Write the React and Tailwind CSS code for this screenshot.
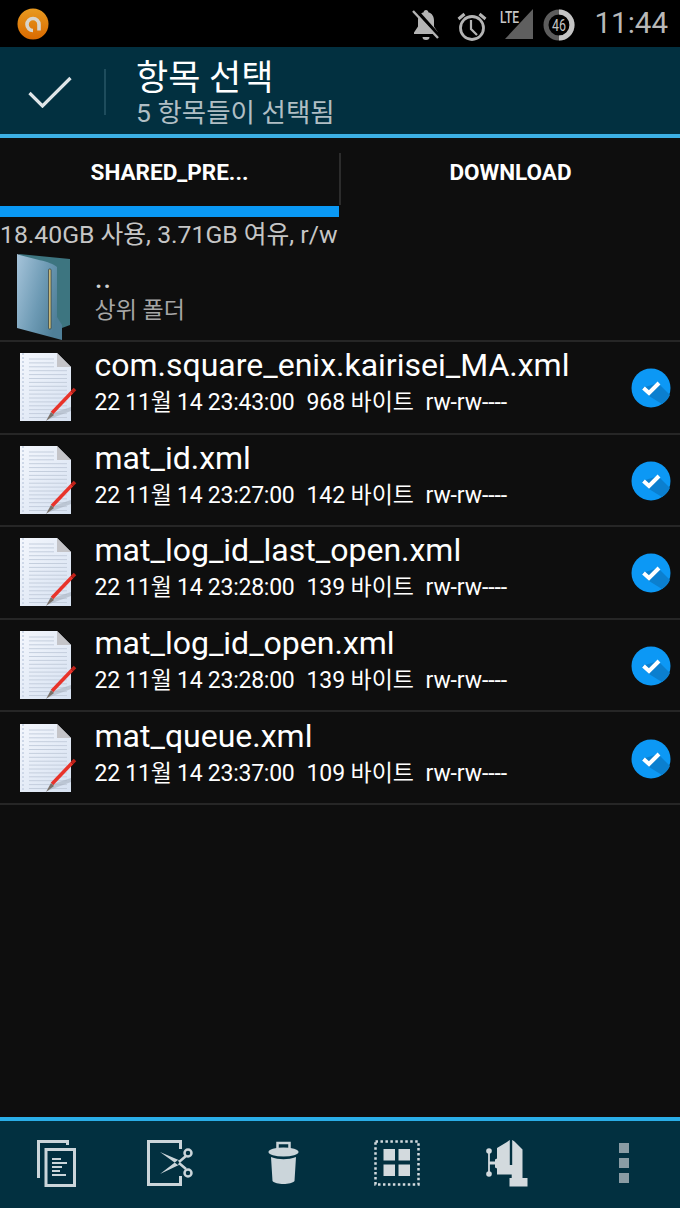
const kr = 'font-["Roboto","Noto_Sans_CJK_KR",sans-serif]';

const files = [
  { name: 'com.square_enix.kairisei_MA.xml', date: '22 11월 14 23:43:00', size: '968 바이트' },
  { name: 'mat_id.xml', date: '22 11월 14 23:27:00', size: '142 바이트' },
  { name: 'mat_log_id_last_open.xml', date: '22 11월 14 23:28:00', size: '139 바이트' },
  { name: 'mat_log_id_open.xml', date: '22 11월 14 23:28:00', size: '139 바이트' },
  { name: 'mat_queue.xml', date: '22 11월 14 23:37:00', size: '109 바이트' },
];

function AppLogo() {
  return (
    <svg width="34" height="34" viewBox="0 0 34 34">
      <defs>
        <linearGradient id="lg" x1="0" y1="0" x2="0" y2="1">
          <stop offset="0" stopColor="#e89a20" />
          <stop offset="1" stopColor="#d96a00" />
        </linearGradient>
      </defs>
      <circle cx="17" cy="17" r="15.5" fill="url(#lg)" />
      <path d="M23 23.500V17.500a6 6 0 1 0-6 6" fill="none" stroke="#d8d4cc" strokeWidth="3.600" />
    </svg>
  );
}

function StatusIcons() {
  return (
    <div className="flex items-center h-full">
      <svg width="30" height="32" viewBox="0 0 30 32" className="mt-0.5">
        <path d="M15 1c1.500 0 2.300 1 2.300 2.200 4 1.200 5.700 4.400 5.700 8.300v6l4 6v1.500H3V23.500l4-6v-6c0-3.900 1.700-7.100 5.700-8.300C12.700 2 13.500 1 15 1z" fill="#b4b4b4" />
        <path d="M11.500 28h7a3.500 3 0 0 1-7 0z" fill="#b4b4b4" />
        <path d="M4 0l26 29" stroke="#000" strokeWidth="3.500" />
        <path d="M2 2l25 27" stroke="#b4b4b4" strokeWidth="2.400" />
      </svg>
      <svg width="30" height="32" viewBox="0 0 30 32" className="ml-[16px] mt-1">
        <circle cx="15" cy="18" r="11.500" fill="none" stroke="#b4b4b4" strokeWidth="2.800" />
        <path d="M14 10v9l6 6" fill="none" stroke="#b4b4b4" strokeWidth="2.200" />
        <path d="M1.500 9l6-5M28.500 9l-6-5" stroke="#b4b4b4" strokeWidth="3" />
      </svg>
      <div className="relative w-[34px] h-[31px] ml-[12px] mt-[1px]">
        <svg width="34" height="31" viewBox="0 0 34 31">
          <path d="M34 0v30H6z" fill="#5f5f5f" />
        </svg>
        <span className='absolute left-[1px] top-0 font-["Roboto",sans-serif] text-[16px] leading-[17px] font-medium text-[#c8c8c8] scale-x-[.75] origin-left'>LTE</span>
      </div>
      <svg width="32" height="32" viewBox="0 0 32 32" className="ml-[10px] mt-0.5">
        <circle cx="16" cy="16" r="13" fill="none" stroke="#5c5c5c" strokeWidth="5" />
        <path d="M16 3a13 13 0 0 1 0 26" fill="none" stroke="#c4c4c4" strokeWidth="5" />
        <text x="16" y="22" textAnchor="middle" fontSize="17" textLength="14" lengthAdjust="spacingAndGlyphs" fontFamily="Roboto" fill="#c4c4c4">46</text>
      </svg>
      <span className='ml-[20px] mr-[12px] font-["Roboto",sans-serif] text-[29.500px] leading-none text-[#b8b8b8]'>11:44</span>
    </div>
  );
}

function FolderIcon() {
  return (
    <svg width="56" height="88" viewBox="0 0 56 88">
      <defs>
        <linearGradient id="fg" x1="0" y1="0" x2="1" y2="0.500">
          <stop offset="0" stopColor="#a6c4da" />
          <stop offset=".6" stopColor="#6d9ab4" />
          <stop offset="1" stopColor="#4f7f98" />
        </linearGradient>
      </defs>
      <path d="M3 1l51 5v66l-8 3z" fill="#3d7580" />
      <path d="M1 1c14 5 34 7 40 13v50l5 8v15L1 75z" fill="url(#fg)" />
      <rect x="32.500" y="16" width="2.600" height="60" rx="1" fill="#c8b878" stroke="#2c3c44" strokeWidth=".7" />
    </svg>
  );
}

function FileIcon() {
  const lines = [];
  for (let i = 0; i < 16; i++) lines.push(6 + i * 3.9);
  return (
    <svg width="58" height="70" viewBox="0 0 58 70">
      <defs>
        <linearGradient id="pg" x1="0" y1="0" x2="1" y2="1">
          <stop offset="0" stopColor="#f4f7fd" />
          <stop offset="1" stopColor="#d6e1f1" />
        </linearGradient>
      </defs>
      <path d="M0 0h37l14 14v54H0z" fill="url(#pg)" />
      <path d="M37 0l14 14H37z" fill="#c4c4c8" />
      {lines.map(y => (
        <path key={y} d={`M9 ${y}h${y < 14 ? 25 : 38}`} stroke="#c4cedd" strokeWidth="1" />
      ))}
      <path d="M3 0v68" stroke="#ced8e8" strokeWidth="2" strokeDasharray="2 2" />
      <path d="M27 67l24-9v-4L33 60z" fill="#a8b2c0" opacity=".6" />
      <path d="M32 60l20-21" stroke="#e8332a" strokeWidth="3.500" />
      <path d="M26 68l5-9 3 3z" fill="#7a7068" />
      <path d="M52 39l3-3" stroke="#c02018" strokeWidth="3.500" />
    </svg>
  );
}

function SelectedBadge() {
  return (
    <svg width="40" height="40" viewBox="0 0 40 40">
      <circle cx="20" cy="20" r="19.500" fill="#0c98f5" />
      <path d="M18 28l-7-8 16-5 12 12A19.500 19.500 0 0 1 31 36z" fill="#0b7fcf" />
      <path d="M12.500 20l5.500 5 10-10" fill="none" stroke="#fff" strokeWidth="4" />
    </svg>
  );
}

function CopyIcon() {
  return (
    <svg width="39" height="47" viewBox="0 0 39 47" fill="none" stroke="#cbd5da">
      <path d="M1.500 38V1.500h29V5" strokeWidth="3" />
      <rect x="9" y="9.500" width="28.500" height="36" strokeWidth="3" fill="#022f40" />
      <path d="M15 19h9M15 23h15M15 27h10M15 31h8M15 35h14" strokeWidth="1.800" />
    </svg>
  );
}

function CutIcon() {
  return (
    <svg width="46" height="46" viewBox="0 0 46 46" fill="none" stroke="#cbd5da">
      <path d="M33.500 9V1.500H1.500v43h32V36" strokeWidth="3" />
      <path d="M13 12l21 9-3 4zM13 34l21-10-3-4z" fill="#cbd5da" stroke="none" />
      <path d="M32 22l7-6M32 23l7 6" strokeWidth="2.500" />
      <circle cx="41" cy="13" r="3.500" strokeWidth="2.500" />
      <circle cx="41" cy="33" r="3.500" strokeWidth="2.500" />
    </svg>
  );
}

function TrashIcon() {
  return (
    <svg width="31" height="44" viewBox="0 0 31 44" fill="#cbd5da">
      <path d="M9.500 8V2h12v6" fill="none" stroke="#cbd5da" strokeWidth="2.500" />
      <ellipse cx="15.500" cy="11" rx="15" ry="4.500" />
      <path d="M3 16c8 3 17 3 25 0l-1.500 24c-3 4-19 4-22 0z" />
    </svg>
  );
}

function SelectAllIcon() {
  return (
    <svg width="46" height="46" viewBox="0 0 46 46" fill="#d3dade">
      <rect x="1.500" y="1.500" width="43" height="43" fill="none" stroke="#d3dade" strokeWidth="2.500" strokeDasharray="2.500 2.460" />
      <rect x="9.500" y="9" width="11.500" height="11.500" />
      <rect x="24.500" y="9" width="11.500" height="11.500" />
      <rect x="9.500" y="24.500" width="11.500" height="11.500" />
      <rect x="24.500" y="24.500" width="11.500" height="11.500" />
    </svg>
  );
}

function ClampIcon() {
  return (
    <svg width="43" height="48" viewBox="0 0 43 48" fill="#d3dade">
      <path d="M12 9l10-6 3.500-2.500h1l3 2 8 8V39h5v8.500H24.500V39h2.200v-3.500H12v-6l-2-1v-8l2-1z" />
      <path d="M26 0v26" stroke="#023040" strokeWidth="2.400" />
      <path d="M4 12v23" stroke="#d3dade" strokeWidth="1.800" />
      <circle cx="4" cy="12" r="2.800" />
      <circle cx="4" cy="35" r="2.800" />
      <path d="M4 24h8" stroke="#d3dade" strokeWidth="3" />
    </svg>
  );
}

function MoreIcon() {
  return (
    <div className="flex flex-col gap-[5px]">
      <div className="w-[10px] h-[10px] bg-[#8a9ca4]" />
      <div className="w-[10px] h-[10px] bg-[#8a9ca4]" />
      <div className="w-[10px] h-[10px] bg-[#8a9ca4]" />
    </div>
  );
}

function FileRow({ file }) {
  return (
    <div className="h-[92.6px] flex items-center border-b-2 border-[#262626]">
      <div className="w-[94.500px] pl-[20px] pt-[2px] shrink-0">
        <FileIcon />
      </div>
      <div className="flex-1 min-w-0 -mt-[10px]">
        <div className="text-[32px] leading-[38px] text-white">{file.name}</div>
        <div className="flex text-[23px] leading-[30px] text-white mt-[4px]">
          <span className="w-[212px] tracking-[-.25px]">{file.date}</span>
          <span className="w-[119px] tracking-[-.1px]">{file.size}</span>
          <span className="tracking-[-.1px]">rw-rw----</span>
        </div>
      </div>
      <div className="w-[49px] shrink-0 pt-[2px]">
        <SelectedBadge />
      </div>
    </div>
  );
}

export default function App() {
  return (
    <div className={`w-[680px] h-[1208px] flex flex-col bg-[#0e0e0e] overflow-hidden ${kr}`}>
      <div className="h-[47px] bg-black flex items-center justify-between shrink-0">
        <div className="ml-[16px] mt-[1px]">
          <AppLogo />
        </div>
        <StatusIcons />
      </div>

      <div className="h-[91px] bg-[#023040] border-b-4 border-[#3cb0e4] flex items-center shrink-0">
        <div className="w-[106px] flex items-center h-[46px] border-r-2 border-[#1e4c5c] pl-[28px] mt-[2px]">
          <svg width="44" height="32" viewBox="0 0 44 32" fill="none" stroke="#dfe5e8" strokeWidth="3.200">
            <path d="M1.500 17l13 13L42.500 2" />
          </svg>
        </div>
        <div className="ml-[30px] flex flex-col pt-[7px]">
          <span className="text-[35px] leading-[38px] text-white">항목 선택</span>
          <span className="text-[26.500px] leading-[30px] text-[#b0bec4]">5 항목들이 선택됨</span>
        </div>
      </div>

      <div className="h-[79px] flex shrink-0">
        <div className="w-[339px] flex flex-col">
          <div className="h-[68px] pt-[2px] flex items-center justify-center text-[22.500px] font-bold text-white">
            SHARED_PRE...
          </div>
          <div className="h-[11px] bg-[#0a99f5]" />
        </div>
        <div className="w-[2px] h-[52px] mt-[15px] bg-[#2c2c2c]" />
        <div className="flex-1 h-[68px] pt-[2px] flex items-center justify-center text-[22.500px] font-bold text-white">
          DOWNLOAD
        </div>
      </div>

      <div className="h-[33px] pt-[3px] flex items-center text-[24.750px] text-[#c6c6c6] shrink-0 whitespace-nowrap">
        18.40GB 사용, 3.71GB 여유, r/w
      </div>

      <div className="h-[92px] flex items-center border-b-2 border-[#262626] shrink-0">
        <div className="w-[94.500px] pl-[16px] shrink-0 pt-[4px]">
          <FolderIcon />
        </div>
        <div className="flex flex-col -mt-[6px]">
          <span className="text-[32px] leading-[38px] text-[#d0d0d0]">..</span>
          <span className="text-[23px] leading-[30px] text-[#a6a6a6]">상위 폴더</span>
        </div>
      </div>

      <div className="flex-1 min-h-0">
        {files.map(f => (
          <FileRow key={f.name} file={f} />
        ))}
      </div>

      <div className="h-[91px] bg-[#023040] border-t-4 border-[#2aaee8] shrink-0 flex items-center pl-[37px] pb-[3px]">
        <CopyIcon />
        <div className="ml-[71px]">
          <CutIcon />
        </div>
        <div className="ml-[75px]">
          <TrashIcon />
        </div>
        <div className="ml-[75px]">
          <SelectAllIcon />
        </div>
        <div className="ml-[65px]">
          <ClampIcon />
        </div>
        <div className="ml-[91px]">
          <MoreIcon />
        </div>
      </div>
    </div>
  );
}
